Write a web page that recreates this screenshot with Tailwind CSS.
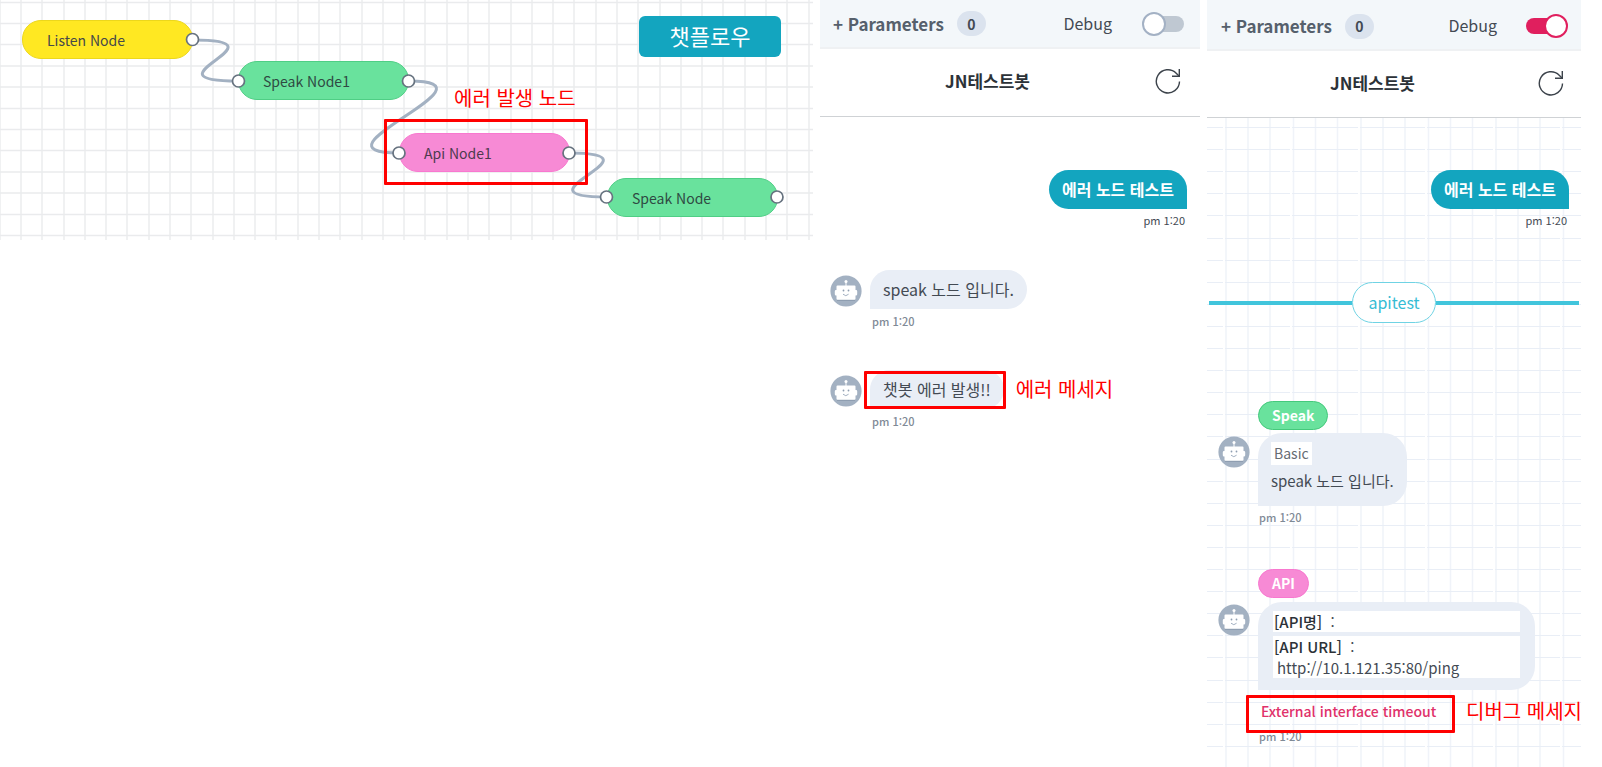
<!DOCTYPE html>
<html lang="ko">
<head>
<meta charset="utf-8">
<title>챗플로우</title>
<script src="https://cdn.jsdelivr.net/npm/@tailwindcss/browser@4"></script>
</head>
<body class="min-h-screen overflow-x-hidden bg-white font-['Noto_Sans_CJK_KR','Noto_Sans',sans-serif] text-[#434a53]">
<svg class="hidden" aria-hidden="true">
  <symbol id="bot" viewBox="0 0 32 32">
    <circle cx="16" cy="16" r="15.6" fill="#a3b1c2"/>
    <path d="M7 24.500h18V26H7z" fill="#8f9eb1"/>
    <circle cx="16" cy="6.600" r="1.500" fill="#fff"/>
    <path d="M15.500 7h1v4h-1z" fill="#fff"/>
    <path d="M7.500 10.500h17a1 1 0 0 1 1 1v3.500h.5a1.200 1.200 0 0 1 1.200 1.200v3a1.200 1.200 0 0 1-1.200 1.200h-.5V23.700a1 1 0 0 1-1 1h-17a1 1 0 0 1-1-1v-3.300H6a1.200 1.200 0 0 1-1.200-1.200v-3A1.200 1.200 0 0 1 6 15h.5v-3.500a1 1 0 0 1 1-1z" fill="#fff"/>
    <circle cx="13.500" cy="15.500" r=".9" fill="#8f9eb1"/><circle cx="18.500" cy="15.500" r=".9" fill="#8f9eb1"/>
    <path d="M13 19.200q2.800 3 5.600 0" fill="none" stroke="#a3b1c2"/>
  </symbol>
  <symbol id="refresh" viewBox="0 0 26 26">
    <path d="M24.500 13.500A11.600 11.600 0 1 1 21.200 5.200L24 8" fill="none" stroke="#3c434b" stroke-width="1.400"/>
    <path d="M24.300 1v7.300H17" fill="none" stroke="#3c434b" stroke-width="1.400"/>
  </symbol>
</svg>

<div class="grid min-h-screen grid-cols-[813fr_380fr_374fr] gap-x-[7px] pr-[21px]">

  <!-- Flow canvas -->
  <main class="relative h-60 overflow-hidden">
    <svg class="absolute inset-0 h-full w-full" aria-hidden="true">
      <defs>
        <pattern id="cols" x="20" width="149" height="10" patternUnits="userSpaceOnUse">
          <path d="M1 0v10M22 0v10M44 0v10M65 0v10M86 0v10M107 0v10M129 0v10" stroke="#eaebed" stroke-width="1.400"/>
        </pattern>
        <pattern id="rows" y="1" width="10" height="106" patternUnits="userSpaceOnUse">
          <path d="M0 1.500h10M0 22.500h10M0 43.500h10M0 65h10M0 86h10" stroke="#eaebed" stroke-width="1.400"/>
        </pattern>
      </defs>
      <rect width="100%" height="100%" fill="url(#cols)"/>
      <rect width="100%" height="100%" fill="url(#rows)"/>
      <g fill="none" stroke="#a3b1c2" stroke-width="3">
        <path d="M193 40C293 40 137 81 238 81"/>
        <path d="M409 81C508 81 300 153 399 153"/>
        <path d="M569 153C670 153 506 197 607 197"/>
      </g>
    </svg>
    <div class="absolute top-[20px] left-[22px] flex h-[39px] w-[171px] items-center rounded-[19px] border border-[#ecd71c] bg-[#ffe822] pl-6 text-sm text-[#45484a]">Listen Node</div>
    <div class="absolute top-[61px] left-[238px] flex h-[39px] w-[171px] items-center rounded-[19px] border border-[#4fce85] bg-[#69e29d] pl-6 text-sm text-[#2f4a43]">Speak Node1</div>
    <div class="absolute top-[133px] left-[399px] flex h-[39px] w-[171px] items-center rounded-[19px] border border-[#f878cf] bg-[#f78ad5] pl-6 text-sm text-[#4d3a4e]">Api Node1</div>
    <div class="absolute top-[178px] left-[607px] flex h-[39px] w-[171px] items-center rounded-[19px] border border-[#4fce85] bg-[#69e29d] pl-6 text-sm text-[#2f4a43]">Speak Node</div>
    <svg class="absolute inset-0 h-full w-full" fill="#fff" stroke="#66727f" stroke-width="1.700" aria-hidden="true">
      <circle cx="192.500" cy="39.500" r="6"/><circle cx="238.500" cy="81" r="6"/><circle cx="408.500" cy="81" r="6"/>
      <circle cx="399" cy="153" r="6"/><circle cx="569" cy="153" r="6"/><circle cx="606.500" cy="197" r="6"/><circle cx="777" cy="197" r="6"/>
    </svg>
    <div class="absolute top-[119px] left-[384px] h-[66px] w-[204px] rounded-[1px] border-3 border-[#ff0000]"></div>
    <p class="absolute top-[84px] left-[454px] text-xl leading-7 whitespace-nowrap text-[#ff0000]">에러 발생 노드</p>
    <button class="absolute top-4 left-[639px] h-[41px] w-[142px] rounded-md bg-[#13a5bf] pb-1 text-[22px] leading-none text-white">챗플로우</button>
  </main>

  <!-- Chat, debug off -->
  <section class="flex flex-col">
    <header class="flex h-[49px] items-center border-b-2 border-[#eff1f3] bg-[#f3f7fa] pr-4 pl-[13px]">
      <button class="text-[17px] leading-6 font-bold text-[#56606c]">+ Parameters</button>
      <span class="ml-[13px] flex h-[25px] w-[29px] items-center justify-center rounded-full bg-[#dbe3ee] text-sm font-bold">0</span>
      <label for="debug-off" class="mr-[33px] ml-auto pb-0.5 text-base leading-6">Debug</label>
      <input id="debug-off" type="checkbox" class="relative h-4 w-[39px] appearance-none rounded-full bg-[#bfc8d2] before:absolute before:-top-1 before:-left-[3px] before:size-6 before:rounded-full before:border-2 before:border-[#a3b1c4] before:bg-white checked:bg-[#e01f5e] checked:before:left-[18px] checked:before:border-[#e01f5e]">
    </header>
    <div class="flex h-[68px] items-center border-b border-[#cfd2d5] pr-[19px] pb-1">
      <h2 class="flex-1 text-center text-[17px] leading-6 font-bold text-[#2c3238]">JN테스트봇</h2>
      <button aria-label="새로고침"><svg class="size-[26px]"><use href="#refresh"/></svg></button>
    </div>
    <div class="flex flex-col pt-[53px] pr-[13px] pl-2.5">
      <div class="flex flex-col items-end">
        <p class="flex h-[39px] items-center rounded-[20px] rounded-br-none bg-[#13a5bf] px-[13px] pb-0.5 text-base font-bold text-white">에러 노드 테스트</p>
        <time class="mt-[3px] mr-0.5 text-[11px] leading-4">pm 1:20</time>
      </div>
      <div class="mt-[42px] flex gap-2">
        <svg class="mt-[5px] size-8 shrink-0"><use href="#bot"/></svg>
        <div>
          <p class="flex h-[39px] w-fit items-center rounded-[20px] rounded-bl-none bg-[#e9eef6] px-[13px] pb-0.5 text-base">speak 노드 입니다.</p>
          <time class="mt-1 ml-0.5 block text-[11px] leading-4 font-medium text-[#7f8a96] [font-feature-settings:'calt'_0]">pm 1:20</time>
        </div>
      </div>
      <div class="mt-[41px] flex gap-2">
        <svg class="mt-[5px] size-8 shrink-0"><use href="#bot"/></svg>
        <div>
          <div class="relative flex items-center">
            <p class="flex h-[39px] items-center rounded-[20px] rounded-bl-none bg-[#e9eef6] px-[13px] pb-0.5 text-base">챗봇 에러 발생!!</p>
            <span class="absolute top-px -left-[6px] h-[38px] w-[142px] rounded-[1px] border-3 border-[#ff0000]"></span>
            <span class="absolute left-full ml-3 pb-0.5 text-xl leading-7 whitespace-nowrap text-[#ff0000]">에러 메세지</span>
          </div>
          <time class="mt-1 ml-0.5 block text-[11px] leading-4 font-medium text-[#7f8a96] [font-feature-settings:'calt'_0]">pm 1:20</time>
        </div>
      </div>
    </div>
  </section>

  <!-- Chat, debug on -->
  <section class="flex flex-col overflow-hidden">
    <header class="flex h-[51px] items-center border-b-2 border-[#eff1f3] bg-[#f3f7fa] pt-[3px] pr-4 pl-[14px]">
      <button class="text-[17px] leading-6 font-bold text-[#56606c]">+ Parameters</button>
      <span class="ml-[13px] flex h-[25px] w-[29px] items-center justify-center rounded-full bg-[#dbe3ee] text-sm font-bold">0</span>
      <label for="debug-on" class="mr-[29px] ml-auto pb-0.5 text-base leading-6">Debug</label>
      <input id="debug-on" type="checkbox" checked class="relative h-4 w-[39px] appearance-none rounded-full bg-[#bfc8d2] before:absolute before:-top-1 before:-left-[3px] before:size-6 before:rounded-full before:border-2 before:border-[#a3b1c4] before:bg-white checked:bg-[#e01f5e] checked:before:left-[18px] checked:before:border-[#e01f5e]">
    </header>
    <div class="flex h-[67px] items-center border-b border-[#cfd2d5] pr-[17px] pb-0.5">
      <h2 class="flex-1 text-center text-[17px] leading-6 font-bold text-[#2c3238]">JN테스트봇</h2>
      <button aria-label="새로고침"><svg class="size-[26px]"><use href="#refresh"/></svg></button>
    </div>
    <div class="relative flex-1">
      <svg class="absolute inset-0 h-full w-full" aria-hidden="true">
        <defs>
          <pattern id="debug-grid" x="18" y="9" width="135" height="221" patternUnits="userSpaceOnUse">
            <path d="M1 0v221M23 0v221M45 0v221M68.500 0v221M90.500 0v221M112.500 0v221" stroke="#f0f3f9" stroke-width="1.500"/>
            <path d="M0 .5h65M67 .5h66M0 22.500h65M67 22.500h66M0 44.500h65M67 44.500h66M0 66.500h65M67 66.500h66M0 88.500h65M67 88.500h66M0 111.500h65M67 111.500h66M0 133.500h65M67 133.500h66M0 155.500h65M67 155.500h66M0 177.500h65M67 177.500h66M0 199.500h65M67 199.500h66" stroke="#e9eef6" stroke-width="1"/>
          </pattern>
        </defs>
        <rect width="100%" height="100%" fill="url(#debug-grid)"/>
      </svg>
      <div class="relative flex flex-col pt-[52px]">
        <div class="flex flex-col items-end pr-3">
          <p class="flex h-[39px] items-center rounded-[20px] rounded-br-none bg-[#13a5bf] px-[13px] pb-0.5 text-base font-bold text-white">에러 노드 테스트</p>
          <time class="mt-[3px] mr-0.5 text-[11px] leading-4">pm 1:20</time>
        </div>
        <div class="mt-[54px] flex items-center px-0.5">
          <span class="h-1 flex-1 bg-[#41c5dc]"></span>
          <span class="flex h-[41px] items-center rounded-full border border-[#6fd3e4] bg-white px-[15px] pb-0.5 text-base text-[#35bcd4]">apitest</span>
          <span class="h-1 flex-1 bg-[#41c5dc]"></span>
        </div>
        <div class="mt-[78px] flex gap-2 pl-[11px]">
          <svg class="mt-[35px] size-8 shrink-0"><use href="#bot"/></svg>
          <div>
            <span class="flex h-[29px] w-fit items-center rounded-full border border-[#45c97c] bg-[#69e29d] px-[13px] pb-0.5 text-sm font-bold text-white">Speak</span>
            <div class="mt-[3px] flex h-[73px] flex-col items-start rounded-3xl rounded-bl-none bg-[#e9eef6] px-[13px] pt-[9px]">
              <span class="bg-white px-[3px] text-sm leading-[23px] text-[#666c73]">Basic</span>
              <p class="mt-1 text-[15px] leading-6">speak 노드 입니다.</p>
            </div>
            <time class="mt-[3px] ml-px block text-[11px] leading-4 font-medium text-[#7f8a96] [font-feature-settings:'calt'_0]">pm 1:20</time>
          </div>
        </div>
        <div class="mt-11 flex gap-2 pl-[11px]">
          <svg class="mt-[35px] size-8 shrink-0"><use href="#bot"/></svg>
          <div>
            <span class="flex h-[29px] w-fit items-center rounded-full border border-[#f878cf] bg-[#f78ad5] px-[13px] pb-0.5 text-sm font-bold text-white">API</span>
            <div class="mt-1 flex h-[88px] w-[277px] flex-col gap-1 rounded-3xl rounded-bl-none bg-[#e9eef6] px-[15px] pt-[9px] text-[15px] leading-[21px]">
              <p class="bg-white pl-px"><span class="font-medium text-[#2c3238]">[API명]</span> &nbsp;:</p>
              <p class="bg-white pl-px"><span class="font-medium text-[#2c3238]">[API URL]</span> &nbsp;:<br><span class="pl-[3px]">http://10.1.121.35:80/ping</span></p>
            </div>
            <div class="relative mt-[9px] flex h-6 items-center">
              <p class="ml-[3px] text-sm leading-6 font-medium whitespace-nowrap text-[#e0316a]">External interface timeout</p>
              <span class="absolute -top-1 -left-3 h-[38px] w-[209px] rounded-[1px] border-3 border-[#ff0000]"></span>
              <span class="absolute left-[208px] text-xl leading-7 whitespace-nowrap text-[#ff0000]">디버그 메세지</span>
            </div>
            <time class="mt-[5px] ml-px block text-[11px] leading-4 font-medium text-[#7f8a96] [font-feature-settings:'calt'_0]">pm 1:20</time>
          </div>
        </div>
      </div>
    </div>
  </section>
</div>
</body>
</html>
